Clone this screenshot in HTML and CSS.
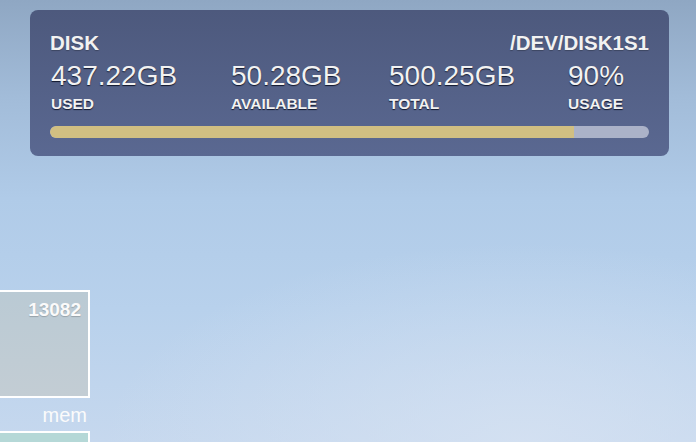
FILE: index.html
```html
<!DOCTYPE html>
<html lang="en">
<head>
    <meta charset="UTF-8">
    <title>Disk</title>
    <link rel="stylesheet" href="styles.css">
</head>
<body>

<!-- disk widget -->
<div class="disk">
    <div class="disk-head">
        <span>DISK</span>
        <span>/DEV/DISK1S1</span>
    </div>
    <div class="disk-stats">
        <div class="stat">
            <div class="value">437.22GB</div>
            <div class="label">USED</div>
        </div>
        <div class="stat">
            <div class="value">50.28GB</div>
            <div class="label">AVAILABLE</div>
        </div>
        <div class="stat">
            <div class="value">500.25GB</div>
            <div class="label">TOTAL</div>
        </div>
        <div class="stat">
            <div class="value">90%</div>
            <div class="label">USAGE</div>
        </div>
    </div>
    <div class="bar"><div class="bar-fill" style="width:87.5%"></div></div>
</div>

<!-- process widget -->
<div class="procs">
    <div class="proc-box"><span class="proc-num">13082</span></div>
    <div class="proc-name">mem</div>
    <div class="proc-box proc-box-teal"></div>
</div>

</body>
</html>
```

FILE: styles.css
```css
*{margin:0;padding:0;box-sizing:border-box;font-family:"Liberation Sans",Arial,sans-serif}
html,body{height:100%}
body{
    overflow:hidden;
    color:#f2f2f2;
    background:
        radial-gradient(ellipse 60% 45% at 75% 100%, rgba(214,226,242,0.8), rgba(214,226,242,0) 100%),
        linear-gradient(180deg,#8fa7c3 0%,#a2bcd9 22%,#b0cbe8 45%,#b8d1ec 70%,#c6d8ee 100%);
    padding-top:10px;
    position:relative;
}
.disk{
    margin:0 27px 0 30px;
    padding:21px 20px 18px 20px;
    border-radius:8px;
    background:linear-gradient(180deg,#4d597d 0%,#5a6891 100%);
}
.disk-head{display:flex;justify-content:space-between;font-size:20.5px;font-weight:bold;line-height:24px;text-shadow:0 1px 1px rgba(0,0,0,0.25)}
.disk-stats{display:grid;grid-template-columns:180px 158px 179px auto;margin-top:6px;padding-left:1px}
.value{font-size:28px;line-height:30px;text-shadow:0 1px 1px rgba(10,15,35,0.9)}
.label{font-size:15.5px;font-weight:bold;line-height:18px;margin-top:4px;text-shadow:0 1px 1px rgba(10,15,35,0.9)}
.bar{margin-top:13px;height:12px;border-radius:6px;background:#abb2c8;overflow:hidden}
.bar-fill{height:100%;background:#d1bf82;border-radius:6px 0 0 6px}

.procs{position:absolute;left:0;top:290px;width:90px}
.proc-box{height:108px;border:2px solid #fff;border-left:none;background:linear-gradient(180deg,#bacad4,#c3cdd4);text-align:right;padding:8px 7px 0 0}
.proc-box-teal{margin-top:6px;height:11px;border-bottom:none;background:#b5d8d7}
.proc-num{font-size:19px;font-weight:bold;line-height:20px;color:#fafafa;text-shadow:0 1px 1px rgba(0,0,0,0.2)}
.proc-name{margin-top:7px;font-size:20px;line-height:20px;text-align:right;padding-right:3px;color:#fbfbfb}
```
